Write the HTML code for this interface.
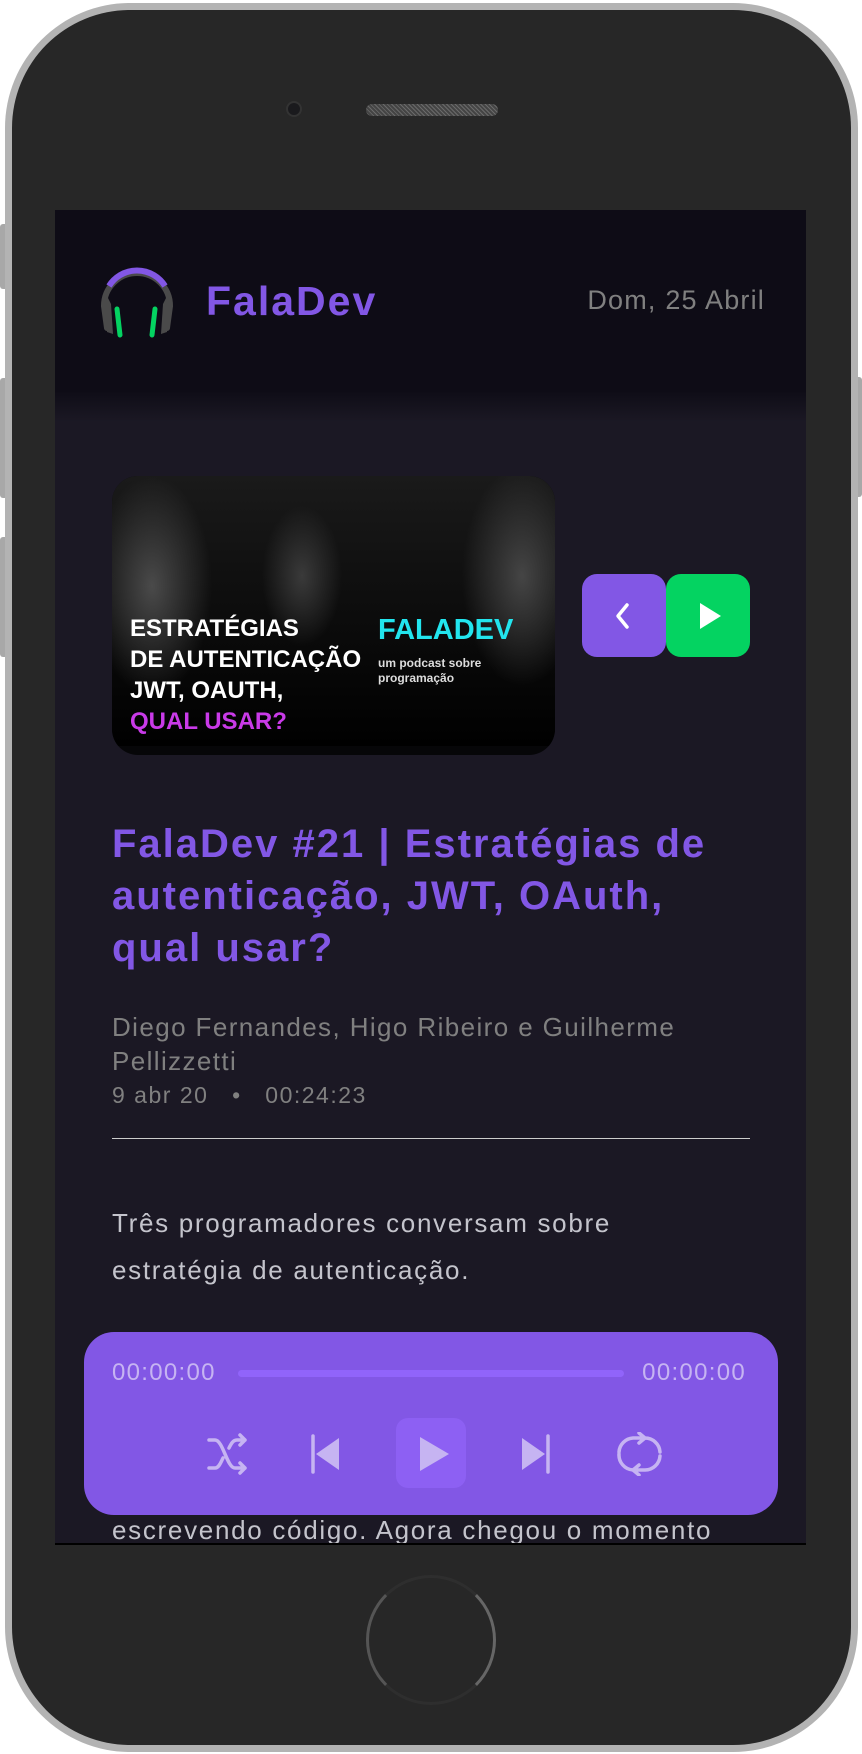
<!DOCTYPE html>
<html><head><meta charset="utf-8"><style>
*{margin:0;padding:0;box-sizing:border-box}
body{width:862px;height:1754px;background:#fff;position:relative;overflow:hidden;font-family:"Liberation Sans",sans-serif}
.abs{position:absolute}
.phone{left:5px;top:3px;width:853px;height:1749px;border-radius:125px;background:#b3b3b3}
.phone2{left:12px;top:10px;width:839px;height:1735px;border-radius:118px;background:#272727}
.side{background:#a8a8a8;width:8px;border-radius:3px}
.screen{left:55px;top:210px;width:751px;height:1335px;background:#1b1824;overflow:hidden}
.hdr{left:0;top:0;width:751px;height:182px;background:#0e0c16}
.hdrsh{left:0;top:182px;width:751px;height:30px;background:linear-gradient(#0f0d17,#1b1824)}
.t{white-space:nowrap}
</style></head><body>
<div class="abs side" style="left:0;top:224px;height:65px"></div>
<div class="abs side" style="left:0;top:378px;height:120px"></div>
<div class="abs side" style="left:0;top:537px;height:120px"></div>
<div class="abs side" style="left:854px;top:377px;height:120px"></div>
<div class="abs phone"></div>
<div class="abs phone2"></div>
<div class="abs" style="left:286px;top:101px;width:16px;height:16px;border-radius:50%;background:#1a1a1d;border:2px solid #333"></div>
<div class="abs" style="left:366px;top:104px;width:132px;height:12px;border-radius:6px;background:#555;background-image:repeating-linear-gradient(45deg,#444 0 2px,#6a6a6a 2px 3px)"></div>
<div class="abs" style="left:366px;top:1575px;width:130px;height:130px;border-radius:50%;border:3px solid #2e2e2e;border-left-color:#555;border-right-color:#666"></div>

<div class="abs screen">
 <div class="abs hdr"></div>
 <div class="abs hdrsh"></div>
 <svg class="abs" style="left:44px;top:54px" width="76" height="76" viewBox="0 0 76 76">
  <path d="M8 64 L5 42 A33 33 0 0 1 71 42 L68 64" fill="none" stroke="#4a4a4a" stroke-width="6" stroke-linecap="round"/>
  <path d="M10 22 A33 33 0 0 1 66 22" fill="none" stroke="#8257e5" stroke-width="6"/>
  <path d="M8 32 L12 40 L14 70 L8 68 Z" fill="#4a4a4a"/>
  <path d="M68 32 L64 40 L62 70 L68 68 Z" fill="#4a4a4a"/>
  <path d="M18 45 L21 71 M56 45 L53 71" stroke="#04d361" stroke-width="5" stroke-linecap="round"/>
 </svg>
 <div class="abs t" style="left:151px;top:68px;font-size:41px;font-weight:bold;color:#8257e5;letter-spacing:2px">FalaDev</div>
 <div class="abs t" style="right:41px;top:75px;font-size:27px;color:#808080;letter-spacing:1.2px">Dom, 25 Abril</div>

 <div class="abs" style="left:57px;top:266px;width:443px;height:279px;border-radius:26px;overflow:hidden;background:#060608">
  <div class="abs" style="left:0;top:0;width:443px;height:270px;background:
   radial-gradient(ellipse 60px 110px at 40px 110px,#4a4a4a,transparent),
   radial-gradient(ellipse 40px 70px at 190px 100px,#3a3a3a,transparent),
   radial-gradient(ellipse 60px 110px at 410px 100px,#454545,transparent),
   linear-gradient(#1a1a1a,#0a0a0a 60%,#000)"></div>
  <div class="abs t" style="left:18px;top:137px;font-size:24px;font-weight:bold;line-height:31px;color:#fff">ESTRATÉGIAS<br>DE AUTENTICAÇÃO<br>JWT, OAUTH,<br><span style="color:#c93ae8">QUAL USAR?</span></div>
  <div class="abs t" style="left:266px;top:138px;font-size:29px;font-weight:bold;color:#22e5ee">FALADEV</div>
  <div class="abs t" style="left:266px;top:180px;font-size:12px;font-weight:bold;line-height:15px;color:#ddd">um podcast sobre<br>programação</div>
 </div>

 <div class="abs" style="left:527px;top:364px;width:84px;height:83px;border-radius:15px;background:#8257e5"></div>
 <svg class="abs" style="left:555px;top:391px" width="28" height="30"><path d="M17 4 L8 15 L17 26" fill="none" stroke="#fff" stroke-width="3.5" stroke-linecap="round" stroke-linejoin="round"/></svg>
 <div class="abs" style="left:611px;top:364px;width:84px;height:83px;border-radius:15px;background:#04d361"></div>
 <svg class="abs" style="left:639px;top:390px" width="30" height="32"><path d="M6 3 L27 16 L6 29 Z" fill="#fff"/></svg>

 <div class="abs t" style="left:57px;top:608px;font-size:40px;font-weight:bold;line-height:52px;color:#8257e5;letter-spacing:2px">FalaDev #21 | Estratégias de<br>autenticação, JWT, OAuth,<br>qual usar?</div>
 <div class="abs t" style="left:57px;top:800px;font-size:26px;line-height:34px;color:#808080;letter-spacing:1.4px">Diego Fernandes, Higo Ribeiro e Guilherme<br>Pellizzetti</div>
 <div class="abs t" style="left:57px;top:872px;font-size:23px;color:#808080;letter-spacing:1.5px">9 abr 20 &nbsp;&nbsp;•&nbsp;&nbsp; 00:24:23</div>
 <div class="abs" style="left:57px;top:928px;width:638px;height:1px;background:#ccc"></div>
 <div class="abs t" style="left:57px;top:990px;font-size:26px;line-height:47px;color:#c4c4cc;letter-spacing:1.7px">Três programadores conversam sobre<br>estratégia de autenticação.</div>
 <div class="abs t" style="left:57px;top:1305px;font-size:26px;color:#c4c4cc;letter-spacing:1.7px">escrevendo código. Agora chegou o momento</div>

 <div class="abs" style="left:29px;top:1122px;width:694px;height:183px;border-radius:30px;background:#8257e5"></div>
 <div class="abs t" style="left:57px;top:1149px;font-size:24px;color:#c6b4f2;letter-spacing:1.3px">00:00:00</div>
 <div class="abs t" style="right:60px;top:1149px;font-size:24px;color:#c6b4f2;letter-spacing:1.3px">00:00:00</div>
 <div class="abs" style="left:183px;top:1160px;width:386px;height:7px;border-radius:4px;background:#9164fa"></div>
 <div class="abs" style="left:341px;top:1208px;width:70px;height:70px;border-radius:12px;background:#9164fa;opacity:.7"></div>
 <svg class="abs" style="left:150px;top:1222px" width="460" height="44" viewBox="0 0 460 44">
  <g fill="none" stroke="#c6b4f2" stroke-width="3.5" stroke-linecap="round" stroke-linejoin="round">
   <path d="M4 8 H10 C18 8 22 36 30 36 H40 M4 36 H10 C14 36 16 30 18 26 M24 16 C26 12 28 8 32 8 H40 M35 3 L40 8 L35 13 M35 31 L40 36 L35 41"/>
   <path d="M108 40 L108 4 M343 40 L343 4"/>
   <path d="M455 24 A15 15 0 0 1 440 38 H428 A15 15 0 0 1 414 22 M414 20 A15 15 0 0 1 428 6 H440 A15 15 0 0 1 455 20 M434 1 L440 6 L434 11 M434 33 L428 38 L434 43"/>
  </g>
  <path d="M134 6 L111 22 L134 38 Z" fill="#c6b4f2"/>
  <path d="M317 6 L340 22 L317 38 Z" fill="#c6b4f2"/>
  <path d="M215 5 L244 22 L215 39 Z" fill="#c6b4f2"/>
 </svg>
</div>
<div class="abs" style="left:55px;top:1543px;width:751px;height:2px;background:#000"></div>
</body></html>
